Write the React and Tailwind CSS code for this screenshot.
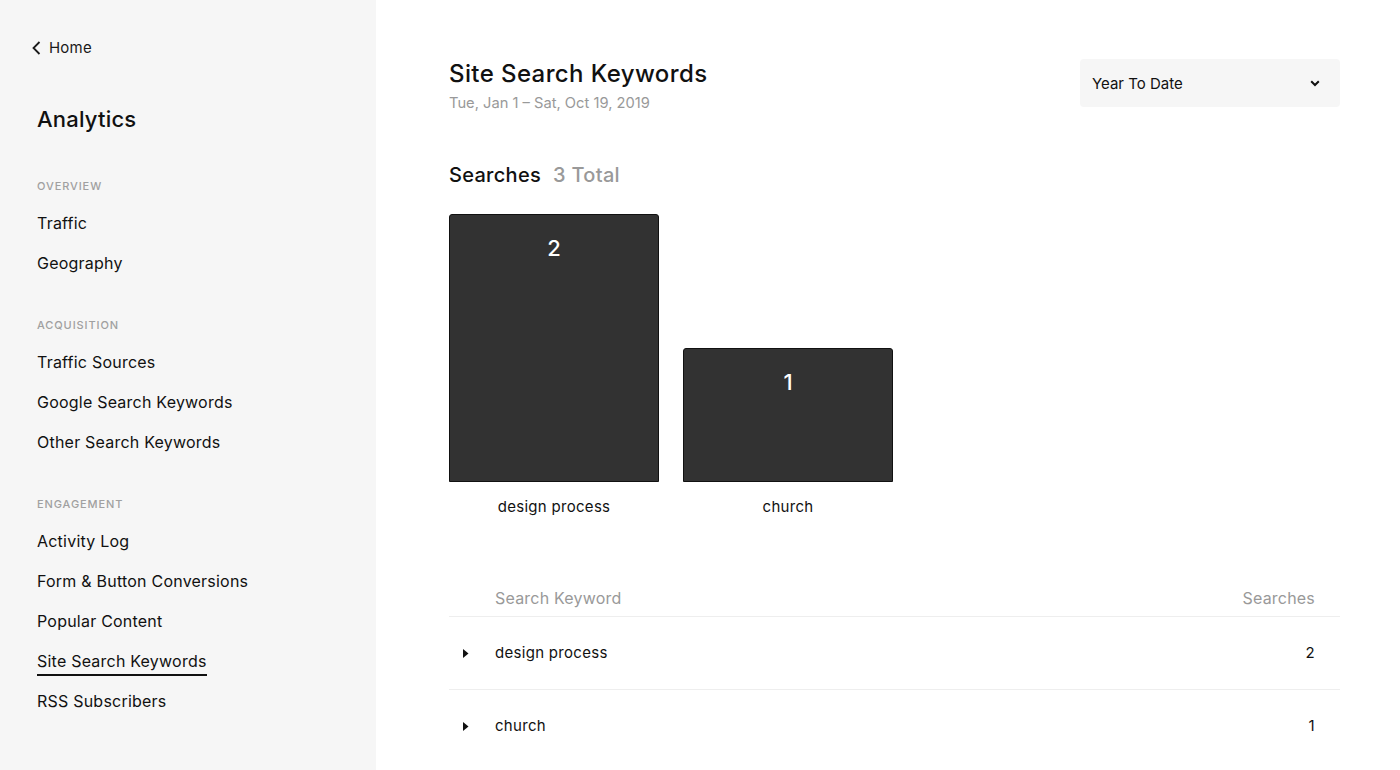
import React from "react";

const sections = [
    { title: "Overview", items: ["Traffic", "Geography"] },
    {
        title: "Acquisition",
        items: ["Traffic Sources", "Google Search Keywords", "Other Search Keywords"],
    },
    {
        title: "Engagement",
        items: [
            "Activity Log",
            "Form & Button Conversions",
            "Popular Content",
            "Site Search Keywords",
            "RSS Subscribers",
        ],
    },
];

const keywords = [
    { name: "design process", count: 2 },
    { name: "church", count: 1 },
];

const font = { fontFamily: "Inter, 'Noto Sans', sans-serif" };

function Sidebar() {
    return (
        <aside className="w-[376px] shrink-0 bg-[#f6f6f6] h-[770px] pl-[37px] pt-[38px]">
            <div className="flex items-center -ml-[6px] h-[20px] text-[15px] text-[#1a1a1a] tracking-[0.2px]">
                <svg width="12" height="16" viewBox="0 0 12 16" className="mr-[6px]">
                    <path d="M8.5 2 L2.5 8 L8.5 14" fill="none" stroke="#1a1a1a" strokeWidth="1.8" />
                </svg>
                Home
            </div>
            <h1 className="mt-[46px] text-[22px] leading-[30px] font-medium text-[#111] tracking-[0.2px]">
                Analytics
            </h1>
            {sections.map((section, i) => (
                <div key={section.title} className={i === 0 ? "mt-[45px]" : "mt-[43px]"}>
                    <div className="text-[11px] leading-[14px] uppercase tracking-[0.9px] text-[#a0a0a0] font-medium">
                        {section.title}
                    </div>
                    <ul className="mt-[19px] space-y-[17px]">
                        {section.items.map((item) => (
                            <li
                                key={item}
                                className="h-[23px] text-[16px] leading-[23px] text-[#111] tracking-[0.22px]"
                            >
                                {item === "Site Search Keywords" ? (
                                    <span className="inline-block border-b-2 border-[#111] leading-[21px] pb-[2px]">
                                        {item}
                                    </span>
                                ) : (
                                    item
                                )}
                            </li>
                        ))}
                    </ul>
                </div>
            ))}
        </aside>
    );
}

function BarChart() {
    const max = Math.max(...keywords.map((k) => k.count));
    return (
        <div className="mt-[26px] flex gap-[24px]">
            {keywords.map((k) => (
                <div key={k.name} className="w-[210px] flex flex-col">
                    <div className="h-[268px] flex flex-col justify-end">
                        <div
                            className="bg-[#323232] border border-[#111] rounded-t-[3px] flex justify-center"
                            style={{ height: `${(k.count / max) * 268}px` }}
                        >
                            <span className="mt-[20px] text-white text-[22px] leading-[26px] font-medium">
                                {k.count}
                            </span>
                        </div>
                    </div>
                    <div className="mt-[15px] text-center text-[15px] leading-[20px] text-[#111] tracking-[0.3px]">
                        {k.name}
                    </div>
                </div>
            ))}
        </div>
    );
}

function KeywordTable() {
    return (
        <div className="mt-[62px]">
            <div className="flex justify-between items-center h-[38px] pl-[46px] pr-[25px] border-b border-[#eeeeee] text-[16px] text-[#999] tracking-[0.2px]">
                <span>Search Keyword</span>
                <span>Searches</span>
            </div>
            {keywords.map((k, i) => (
                <div
                    key={k.name}
                    className={`flex items-center h-[73px] pl-[13px] pr-[25px] text-[15px] text-[#111] tracking-[0.3px] ${
                        i < keywords.length - 1 ? "border-b border-[#eeeeee]" : ""
                    }`}
                >
                    <svg width="7" height="11" viewBox="0 0 7 11" className="mr-[26px]">
                        <path d="M1 1 L6.5 5.5 L1 10 Z" fill="#111" />
                    </svg>
                    <span className="flex-1">{k.name}</span>
                    <span>{k.count}</span>
                </div>
            ))}
        </div>
    );
}

export default function App() {
    const total = keywords.reduce((s, k) => s + k.count, 0);
    return (
        <div className="flex w-[1400px] h-[770px] overflow-hidden bg-white" style={font}>
            <Sidebar />
            <main className="flex-1 pl-[73px] pr-[60px] pt-[59px]">
                <div className="flex justify-between items-start">
                    <div>
                        <h2 className="text-[24px] leading-[30px] font-medium text-[#111] tracking-[0.4px]">
                            Site Search Keywords
                        </h2>
                        <div className="mt-[4px] text-[14.7px] leading-[20px] text-[#999]">
                            Tue, Jan 1 – Sat, Oct 19, 2019
                        </div>
                    </div>
                    <button className="w-[260px] h-[48px] bg-[#f6f6f6] rounded-[4px] flex items-center justify-between pl-[12px] pr-[20px] text-[15px] text-[#111]">
                        <span className="mt-[2px]">Year To Date</span>
                        <svg width="10" height="7" viewBox="0 0 10 7">
                            <path d="M1.2 1.2 L5 5 L8.8 1.2" fill="none" stroke="#111" strokeWidth="2" />
                        </svg>
                    </button>
                </div>
                <div className="mt-[49px] flex items-baseline gap-[12px] text-[20px] leading-[26px] font-medium tracking-[0.3px]">
                    <span className="text-[#111]">Searches</span>
                    <span className="text-[#999]">{total} Total</span>
                </div>
                <BarChart />
                <KeywordTable />
            </main>
        </div>
    );
}
